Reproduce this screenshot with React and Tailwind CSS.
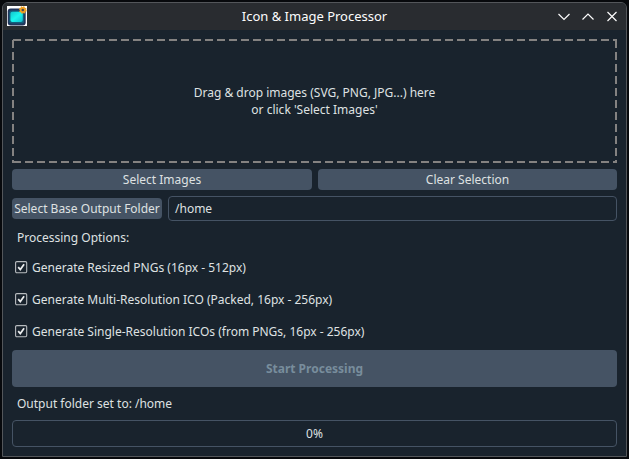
import React from "react";

const button =
  "flex items-center justify-center rounded-[4px] bg-[#455364] text-[#dfe1e2]";

function AppIcon() {
  return (
    <svg width="20" height="20" viewBox="0 0 20 20" className="block">
      <defs>
        <linearGradient id="screen" x1="0" y1="0" x2="1" y2="1">
          <stop offset="0" stopColor="#12c4cc" />
          <stop offset="0.5" stopColor="#1cf6ee" />
          <stop offset="1" stopColor="#12c0d0" />
        </linearGradient>
      </defs>
      <rect width="20" height="20" fill="#ffffff" />
      <rect x="0.7" y="2.5" width="18" height="17" rx="3" fill="#22365c" />
      <rect x="2.2" y="4.6" width="15" height="13" rx="2.5" fill="#145f7c" />
      <rect x="3.4" y="5.8" width="12.4" height="10.2" rx="2" fill="url(#screen)" />
      <circle cx="15.8" cy="4" r="3" fill="#f0a020" stroke="#f0a020" strokeWidth="1.6" strokeDasharray="1.4 0.95" />
      <circle cx="15.8" cy="4" r="1.3" fill="#4a4a50" />
    </svg>
  );
}

function TitleBar() {
  return (
    <div className="flex h-[27px] shrink-0 items-center justify-between bg-[#292c30] pl-1 pr-[7px]">
      <div className="mb-px w-[65px]">
        <AppIcon />
      </div>
      <div className="mb-px whitespace-nowrap text-[13px] leading-[18px] text-[#fcfcfc]">
        Icon &amp; Image Processor
      </div>
      <svg width="62" height="12" viewBox="0 0 62 12" fill="none" stroke="#fcfcfc" strokeWidth="1.2">
        <path d="M1.5 3 L7 8.5 L12.5 3" />
        <path d="M25.5 8.5 L31 3 L36.5 8.5" />
        <path d="M50.5 1 L59.5 10 M59.5 1 L50.5 10" />
      </svg>
    </div>
  );
}

function DropZone() {
  return (
    <div className="relative flex h-[124px] shrink-0 items-center justify-center text-center leading-[17px]">
      <svg className="absolute inset-0" width="605" height="124" fill="none" stroke="#848281" strokeWidth="2">
        <path d="M1 1 H605" strokeDasharray="8 4" />
        <path d="M1 123 H605" strokeDasharray="8 4" />
        <path d="M1 1 V124" strokeDasharray="8 4" />
        <path d="M604 1 V124" strokeDasharray="8 4" />
      </svg>
      <div>
        Drag &amp; drop images (SVG, PNG, JPG...) here
        <br />
        or click 'Select Images'
      </div>
    </div>
  );
}

function Option({ children }) {
  return (
    <div className="flex h-8 items-center pl-[3px]">
      <svg width="13" height="13" viewBox="0 0 13 13" fill="none" className="mr-1 shrink-0">
        <rect x="0.6" y="0.6" width="11.1" height="11.1" rx="1.2" stroke="#b8bcbf" strokeWidth="1.1" />
        <path d="M3.2 6.1 L5.3 8.6 L9.1 3.2" stroke="#eceeef" strokeWidth="1.7" />
      </svg>
      <span className="whitespace-nowrap">{children}</span>
    </div>
  );
}

export default function App() {
  return (
    <div className="h-[459px] w-[629px] bg-[#07090c] pl-[2px] pt-[2px]">
      <div className="flex h-[455px] w-[625px] flex-col overflow-hidden rounded-t-[6px] border border-[#53565a] bg-[#19232d] font-['Noto_Sans',sans-serif] text-[12px] leading-[17px] text-[#dfe1e2]">
        <TitleBar />
        <div className="flex flex-col px-[9px] pt-[9px]">
          <DropZone />
          <div className="mt-[6px] flex gap-[6px]">
            <div className={`${button} h-[21px] w-[300px]`}>Select Images</div>
            <div className={`${button} h-[21px] w-[299px]`}>Clear Selection</div>
          </div>
          <div className="mt-[6px] flex items-center gap-[6px]">
            <div className={`${button} h-[21px] w-[150px] whitespace-nowrap`}>
              Select Base Output Folder
            </div>
            <div className="flex h-[25px] w-[449px] items-center rounded-[4px] border border-[#455364] px-[6px]">
              /home
            </div>
          </div>
          <div className="mt-2 pl-[5px]">Processing Options:</div>
          <div className="mt-[5px] flex flex-col">
            <Option>Generate Resized PNGs (16px - 512px)</Option>
            <Option>Generate Multi-Resolution ICO (Packed, 16px - 256px)</Option>
            <Option>Generate Single-Resolution ICOs (from PNGs, 16px - 256px)</Option>
          </div>
          <div className="mt-[3px] flex h-[37px] items-center justify-center rounded-[4px] bg-[#455364] font-bold text-[#788d9c]">
            Start Processing
          </div>
          <div className="mt-2 pl-[5px]">Output folder set to: /home</div>
          <div className="mt-2 flex h-[27px] items-center justify-center rounded-[4px] border border-[#455364]">
            0%
          </div>
        </div>
      </div>
    </div>
  );
}
